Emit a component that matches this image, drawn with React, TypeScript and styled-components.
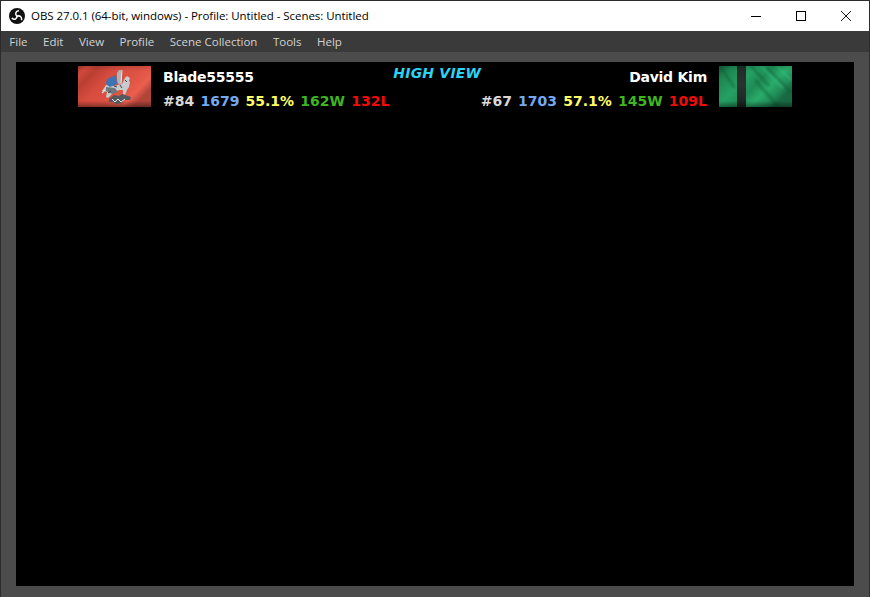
import styled, { createGlobalStyle } from 'styled-components';

const GlobalStyle = createGlobalStyle`
    html, body {
        margin: 0;
        padding: 0;
        background: #4c4c4c;
    }
`;

const Win = styled.div`
    width: 870px;
    height: 597px;
    box-sizing: border-box;
    border: 1px solid #2b2b2b;
    border-bottom: 0;
    display: flex;
    flex-direction: column;
    overflow: hidden;
    font-family: 'Open Sans', 'Noto Sans', sans-serif;
`;
const TitleBar = styled.div`
    height: 30px;
    background: #fff;
    display: flex;
    align-items: center;
    padding: 0 1px 0 8px;
    flex: none;
`;
const TitleText = styled.span`
    font-size: 11.5px;
    letter-spacing: -0.05px;
    color: #000;
    margin: 0 0 2px 6px;
    flex: 1;
`;
const WinButton = styled.div`
    width: 45px;
    height: 30px;
    display: flex;
    align-items: center;
    justify-content: center;
`;
const MenuBar = styled.div`
    height: 21px;
    background: #3a3a3a;
    display: flex;
    align-items: center;
    padding-left: 8.3px;
    gap: 15.5px;
    flex: none;
`;
const MenuItem = styled.span`
    font-size: 11.5px;
    color: #d2d2d2;
`;
const Body = styled.div`
    flex: 1;
    background: #4c4c4c;
    padding: 10px 15px 11px;
    display: flex;
`;
const Preview = styled.div`
    flex: 1;
    background: #000;
    padding: 4px 62px 0;
`;
const Board = styled.div`
    display: flex;
    align-items: flex-start;
    font-family: 'DejaVu Sans', Verdana, sans-serif;
    font-weight: bold;
    font-size: 14px;
`;
const Flag = styled.svg`
    width: 73px;
    height: 41px;
    flex: none;
    display: block;
`;
const Side = styled.div<{ $right?: boolean }>`
    flex: ${(p) => (p.$right ? '1 1 0' : 'none')};
    min-width: 0;
    display: flex;
    flex-direction: column;
    gap: 6px;
    padding-top: 2px;
    margin: ${(p) => (p.$right ? '0 12px 0 0' : '0 0 0 12px')};
    align-items: ${(p) => (p.$right ? 'flex-end' : 'flex-start')};
`;
const Name = styled.div`
    color: #fff;
    line-height: 18px;
    letter-spacing: -0.25px;
`;
const Stats = styled.div`
    display: flex;
    gap: 6.2px;
    line-height: 18px;
    white-space: nowrap;
`;
const Stat = styled.span<{ $c: string }>`
    color: ${(p) => p.$c};
`;
const Mode = styled.div`
    flex: none;
    color: #2bd3f5;
    font-style: italic;
    font-size: 14px;
    line-height: 14px;
    letter-spacing: 0.2px;
    margin-left: 4px;
`;

function ObsLogo() {
    return (
        <svg width="16" height="16" viewBox="0 0 16 16">
            <circle cx="8" cy="8" r="8" fill="#111" />
            <path d="M8 8.2C6 6.6 6.2 3.4 9.4 2.8" stroke="#fff" strokeWidth="1.5" fill="none" strokeLinecap="round" />
            <path d="M8 8.2C10.4 7.2 13 8.8 12.6 11.6" stroke="#fff" strokeWidth="1.5" fill="none" strokeLinecap="round" />
            <path d="M8 8.2C8 10.8 5.4 12.4 3.2 10.4" stroke="#fff" strokeWidth="1.5" fill="none" strokeLinecap="round" />
        </svg>
    );
}

function RedFlag() {
    return (
        <Flag viewBox="0 0 73 41">
            <defs>
                <linearGradient id="red" x1="0" y1="0" x2="1" y2="0.55">
                    <stop offset="0" stopColor="#a9352a" />
                    <stop offset="0.1" stopColor="#cf4a3c" />
                    <stop offset="0.22" stopColor="#bb3e32" />
                    <stop offset="0.42" stopColor="#d64c3e" />
                    <stop offset="0.68" stopColor="#dd5243" />
                    <stop offset="0.88" stopColor="#ec5e4e" />
                    <stop offset="1" stopColor="#b2443a" />
                </linearGradient>
                <linearGradient id="redShade" x1="0" y1="0" x2="0" y2="1">
                    <stop offset="0" stopColor="#000" stopOpacity="0.12" />
                    <stop offset="0.12" stopColor="#000" stopOpacity="0" />
                    <stop offset="0.85" stopColor="#000" stopOpacity="0" />
                    <stop offset="1" stopColor="#000" stopOpacity="0.4" />
                </linearGradient>
                <filter id="soft">
                    <feGaussianBlur stdDeviation="0.3" />
                </filter>
            </defs>
            <rect width="73" height="41" fill="url(#red)" />
            <rect width="73" height="41" fill="url(#redShade)" />
            <g filter="url(#soft)">
                <path d="M24 25l4-6 8 1 8-2 3-6 2-2 3 2-1 3 1 1-1 5-2 3-2 5-2-1 0-4-4 0-6 3-5 5-2-1 1-5-3-1z" fill="#c6cbce" />
                <path d="M39 15l0-8 2-3 2 0 1 3 0 9-3 3z" fill="#aeb3b7" />
                <path d="M29 13l9-4 1 9-7 3-4-3z" fill="#3b74b4" />
                <path d="M28 21l9 1 3 4-6 2-6-3z" fill="#6f777d" />
                <path d="M31 33l5-4 5 1 3-2 3 1 6 2-1 3-6 0-2 3-6 1-3-2-4 0z" fill="#54585c" />
                <path d="M34 33l3 3 3-3 3 3 4-3" fill="none" stroke="#e8e8e8" strokeWidth="1" />
                <path d="M44 4l-1 14" stroke="#e6e6e6" strokeWidth="0.9" />
                <path d="M27 24l-3 3" stroke="#dfe2e4" strokeWidth="1.4" />
                <path d="M36 20l3 1M42 19l2 3M47 14l2 2M30 27l3-2" stroke="#3e4347" strokeWidth="1" fill="none" />
            </g>
        </Flag>
    );
}

function GreenFlag() {
    return (
        <Flag viewBox="0 0 73 41">
            <defs>
                <linearGradient id="green" x1="0" y1="0" x2="1" y2="0.55">
                    <stop offset="0" stopColor="#135a36" />
                    <stop offset="0.14" stopColor="#1d8450" />
                    <stop offset="0.4" stopColor="#25a063" />
                    <stop offset="0.58" stopColor="#1f8c56" />
                    <stop offset="0.74" stopColor="#2aab6a" />
                    <stop offset="0.88" stopColor="#228f59" />
                    <stop offset="1" stopColor="#176a41" />
                </linearGradient>
                <linearGradient id="greenShade" x1="0" y1="0" x2="0" y2="1">
                    <stop offset="0" stopColor="#000" stopOpacity="0.1" />
                    <stop offset="0.12" stopColor="#000" stopOpacity="0" />
                    <stop offset="0.85" stopColor="#000" stopOpacity="0" />
                    <stop offset="1" stopColor="#000" stopOpacity="0.4" />
                </linearGradient>
                <linearGradient id="band" x1="0" y1="0" x2="0" y2="1">
                    <stop offset="0" stopColor="#202b27" />
                    <stop offset="0.45" stopColor="#2b3330" />
                    <stop offset="1" stopColor="#1a2320" />
                </linearGradient>
                <filter id="softer">
                    <feGaussianBlur stdDeviation="1" />
                </filter>
            </defs>
            <rect width="73" height="41" fill="url(#green)" />
            <path
                d="M2 2l14 20M32 0l18 20M48 2l24 24M36 14l24 27"
                stroke="#0d5531"
                strokeWidth="3"
                opacity="0.4"
                fill="none"
                filter="url(#softer)"
            />
            <path d="M42 0l22 22M58 0l14 14" stroke="#3cc585" strokeWidth="2.5" opacity="0.4" fill="none" filter="url(#softer)" />
            <rect x="18" width="9" height="41" fill="url(#band)" />
            <rect width="73" height="41" fill="url(#greenShade)" />
        </Flag>
    );
}

const menus = ['File', 'Edit', 'View', 'Profile', 'Scene Collection', 'Tools', 'Help'];

export default function App() {
    return (
        <Win>
            <GlobalStyle />
            <TitleBar>
                <ObsLogo />
                <TitleText>OBS 27.0.1 (64-bit, windows) - Profile: Untitled - Scenes: Untitled</TitleText>
                <WinButton>
                    <svg width="10" height="10" viewBox="0 0 10 10">
                        <path d="M0 5.5h10" stroke="#000" fill="none" />
                    </svg>
                </WinButton>
                <WinButton>
                    <svg width="10" height="10" viewBox="0 0 10 10">
                        <rect x="0.5" y="0.5" width="9" height="9" stroke="#000" fill="none" />
                    </svg>
                </WinButton>
                <WinButton>
                    <svg width="10" height="10" viewBox="0 0 10 10">
                        <path d="M0 0l10 10M10 0L0 10" stroke="#000" strokeWidth="0.9" fill="none" />
                    </svg>
                </WinButton>
            </TitleBar>
            <MenuBar>
                {menus.map((m) => (
                    <MenuItem key={m}>{m}</MenuItem>
                ))}
            </MenuBar>
            <Body>
                <Preview>
                    <Board>
                        <RedFlag />
                        <Side>
                            <Name>Blade55555</Name>
                            <Stats>
                                <Stat $c="#d9d9d9">#84</Stat>
                                <Stat $c="#74a9f2">1679</Stat>
                                <Stat $c="#ffff66">55.1%</Stat>
                                <Stat $c="#3fb51f">162W</Stat>
                                <Stat $c="#f50a0a">132L</Stat>
                            </Stats>
                        </Side>
                        <Mode>HIGH VIEW</Mode>
                        <Side $right>
                            <Name>David Kim</Name>
                            <Stats>
                                <Stat $c="#d9d9d9">#67</Stat>
                                <Stat $c="#74a9f2">1703</Stat>
                                <Stat $c="#ffff66">57.1%</Stat>
                                <Stat $c="#3fb51f">145W</Stat>
                                <Stat $c="#f50a0a">109L</Stat>
                            </Stats>
                        </Side>
                        <GreenFlag />
                    </Board>
                </Preview>
            </Body>
        </Win>
    );
}
